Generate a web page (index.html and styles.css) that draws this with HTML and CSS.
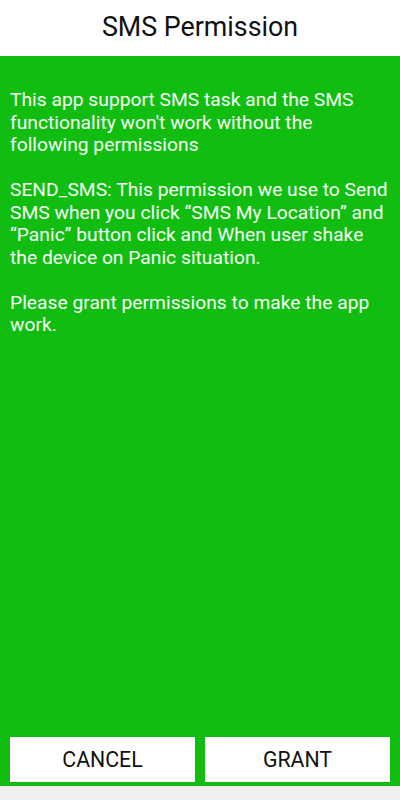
FILE: index.html
```html
<!DOCTYPE html>
<html lang="en">
<head>
    <meta charset="UTF-8">
    <meta name="viewport" content="width=device-width, initial-scale=1.0">
    <title>SMS Permission</title>
    <link rel="stylesheet" href="styles.css">
</head>
<body>
    <div class="screen">
        <header class="title-bar">SMS Permission</header>
        <main class="content">
            <p>This app support SMS task and the SMS functionality won't work without the following permissions</p>
            <p>SEND_SMS: This permission we use to Send SMS when you click “SMS My Location” and “Panic” button click and When user shake the device on Panic situation.</p>
            <p>Please grant permissions to make the app work.</p>
        </main>
        <div class="actions">
            <button class="action-button">CANCEL</button>
            <button class="action-button">GRANT</button>
        </div>
        <div class="nav-strip"></div>
    </div>
</body>
</html>
```

FILE: styles.css
```css
body {
    font-family: Roboto, "Liberation Sans", sans-serif;
    margin: 0;
    padding: 0;
}

.screen {
    display: flex;
    flex-direction: column;
    height: 800px;
}

.title-bar {
    height: 56px;
    line-height: 55px;
    text-align: center;
    font-size: 26.8px;
    color: #111;
    background-color: #fff;
}

.content {
    flex: 1;
    padding: 33px 10px 0;
    background-color: #12bd12;
    color: #f2fff2;
    font-size: 19.25px;
    line-height: 22.5px;
}

.content p {
    margin: 0 0 22.5px;
}

.actions {
    display: flex;
    gap: 10px;
    padding: 10px 10px 4px;
    background-color: #12bd12;
}

.action-button {
    flex: 1;
    height: 45px;
    padding: 0;
    background-color: #fff;
    color: #111;
    border: none;
    border-radius: 0;
    font-family: Roboto, "Liberation Sans", sans-serif;
    font-size: 21.3px;
}

.nav-strip {
    height: 14px;
    background-color: #f0f0f0;
}
```
